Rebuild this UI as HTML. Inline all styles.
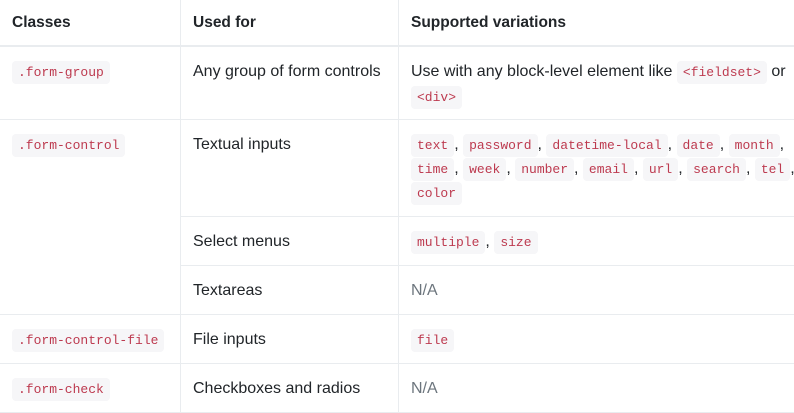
<!DOCTYPE html>
<html><head><meta charset="utf-8"><style>
*{margin:0;padding:0;box-sizing:border-box}
body{width:794px;height:413px;background:#fff;position:relative;overflow:hidden;font-family:"Liberation Sans",sans-serif;font-size:16px;color:#212529}
.h{position:absolute;background:#e9ecef;height:1px}
.v{position:absolute;background:#e9ecef;width:1px}
.t{position:absolute;white-space:nowrap;line-height:24px}
.b{font-weight:bold;font-size:15.5px}
code{font-family:"Liberation Mono",monospace;font-size:13px;color:#bd3a4f;background:#f6f6f8;border-radius:4px;padding:4px 6px;line-height:24px}
.g{color:#6c757d}
</style></head><body>
<div class="h" style="top:45px;left:0;width:794px;height:2px"></div>
<div class="h" style="top:119px;left:0;width:794px"></div>
<div class="h" style="top:216px;left:180px;width:614px"></div>
<div class="h" style="top:265px;left:180px;width:614px"></div>
<div class="h" style="top:314px;left:0;width:794px"></div>
<div class="h" style="top:363px;left:0;width:794px"></div>
<div class="h" style="top:412px;left:0;width:794px"></div>
<div class="v" style="left:180px;top:0;height:413px"></div>
<div class="v" style="left:398px;top:0;height:413px"></div>

<div class="t b" style="left:12px;top:11px">Classes</div>
<div class="t b" style="left:193px;top:11px">Used for</div>
<div class="t b" style="left:411px;top:11px">Supported variations</div>

<div class="t" style="left:12px;top:60px"><code>.form-group</code></div>
<div class="t" style="left:193px;top:60px">Any group of form controls</div>
<div class="t" style="left:411px;top:60px">Use with any block-level element like <code>&lt;fieldset&gt;</code> or</div>
<div class="t" style="left:411px;top:85px"><code>&lt;div&gt;</code></div>

<div class="t" style="left:12px;top:133px"><code>.form-control</code></div>
<div class="t" style="left:193px;top:133px">Textual inputs</div>
<div class="t" style="left:411px;top:133px"><code>text</code>, <code>password</code>, <code>datetime-local</code>, <code>date</code>, <code>month</code>,</div>
<div class="t" style="left:411px;top:157px"><code>time</code>, <code>week</code>, <code>number</code>, <code>email</code>, <code>url</code>, <code>search</code>, <code>tel</code>,</div>
<div class="t" style="left:411px;top:181px"><code>color</code></div>

<div class="t" style="left:193px;top:230px">Select menus</div>
<div class="t" style="left:411px;top:230px"><code>multiple</code>, <code>size</code></div>

<div class="t" style="left:193px;top:279px">Textareas</div>
<div class="t g" style="left:411px;top:279px">N/A</div>

<div class="t" style="left:12px;top:328px"><code>.form-control-file</code></div>
<div class="t" style="left:193px;top:328px">File inputs</div>
<div class="t" style="left:411px;top:328px"><code>file</code></div>

<div class="t" style="left:12px;top:377px"><code>.form-check</code></div>
<div class="t" style="left:193px;top:377px">Checkboxes and radios</div>
<div class="t g" style="left:411px;top:377px">N/A</div>
</body></html>
